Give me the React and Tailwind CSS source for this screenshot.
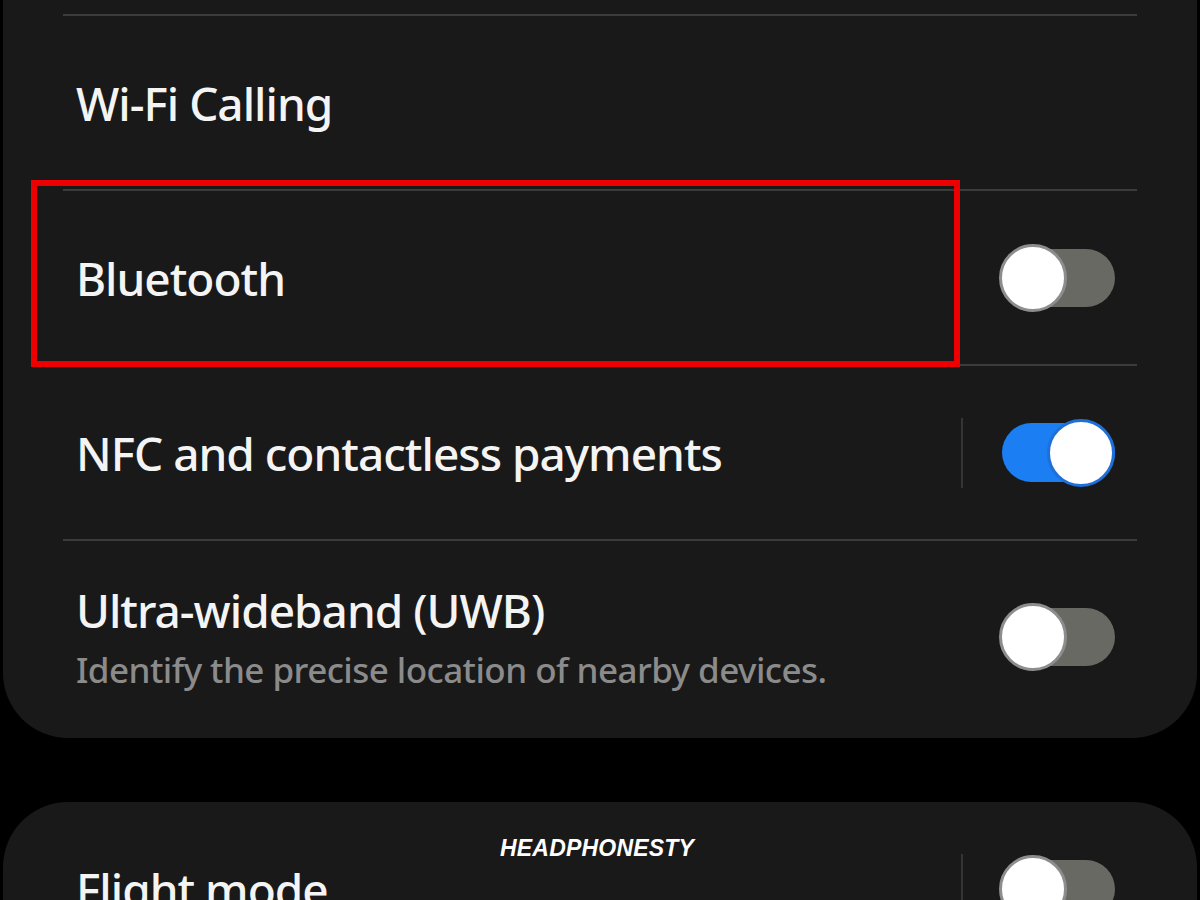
import React from 'react'

const rowFont = { fontFamily: '"Noto Sans", "Open Sans", sans-serif' }

function Toggle({ on }) {
  if (on) {
    return (
      <div className="relative w-[116px] h-[70px] shrink-0">
        <div className="absolute left-[3px] right-0 top-[5px] h-[59px] rounded-full bg-[#1b7ef2]" />
        <div className="absolute right-0 top-[1px] w-[68px] h-[68px] rounded-full bg-white border-[3px] border-[#1f6fd8]" />
      </div>
    )
  }
  return (
    <div className="relative w-[116px] h-[70px] shrink-0">
      <div className="absolute left-[4px] right-0 top-[6px] h-[58px] rounded-full bg-[#696964]" />
      <div className="absolute left-0 top-[1px] w-[68px] h-[68px] rounded-full bg-white border-[3px] border-[#8d8d8d]" />
    </div>
  )
}

function Divider() {
  return <div className="mx-[60px] h-[2px] bg-[#3b3b3b]" />
}

function Row({ title, sub, on, showToggle, split, tall }) {
  return (
    <div className={`flex items-center pl-[73px] pr-[82px] ${tall ? 'h-[197px] pb-[6px]' : 'h-[173px]'}`}>
      <div className="flex-1 flex flex-col">
        <span className="text-[46px] leading-[58px] font-medium text-[#f4f4f4] tracking-[-1px]">{title}</span>
        {sub && (
          <span className="mt-[8px] text-[35px] leading-[46px] font-medium text-[#8b8b8b] tracking-[-0.55px]">{sub}</span>
        )}
      </div>
      {split && <div className="w-[2px] h-[70px] bg-[#353535] mr-[36px]" />}
      {showToggle && <Toggle on={on} />}
    </div>
  )
}

export default function App() {
  return (
    <div className="relative w-[1200px] h-[900px] bg-black overflow-hidden" style={rowFont}>
      {/* connections card */}
      <div className="mx-[3px] bg-[#191919] rounded-b-[65px] pt-[14px]">
        <Divider />
        <Row title="Wi-Fi Calling" />
        <Divider />
        <Row title="Bluetooth" showToggle />
        <Divider />
        <Row title="NFC and contactless payments" showToggle on split />
        <Divider />
        <Row title="Ultra-wideband (UWB)" sub="Identify the precise location of nearby devices." showToggle tall />
      </div>

      {/* second card */}
      <div className="mx-[3px] mt-[64px] bg-[#191919] rounded-t-[65px]">
        <Row title="Flight mode" showToggle split />
      </div>

      {/* highlight box */}
      <div className="absolute left-[31px] top-[180px] w-[929px] h-[187px] border-[6px] border-[#ee0000]" />

      {/* watermark */}
      <div
        className="absolute left-[500px] top-[831px] text-[23px] font-bold italic text-white tracking-[0.2px]"
        style={{ fontFamily: '"Liberation Sans", Arial, sans-serif' }}
      >
        HEADPHONESTY
      </div>
    </div>
  )
}
